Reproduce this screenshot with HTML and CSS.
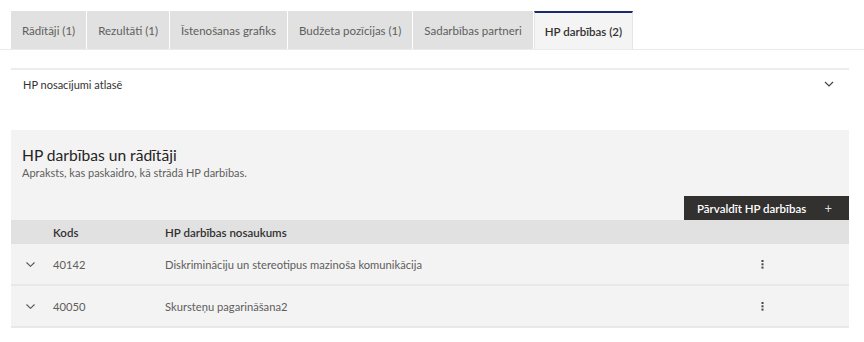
FILE: index.html
```html
<!DOCTYPE html>
<html lang="lv">
<head>
    <meta charset="UTF-8">
    <meta name="viewport" content="width=device-width, initial-scale=1.0">
    <link rel="stylesheet" href="styles.css">
    <title>HP darbības</title>
</head>
<body>
    <div class="tabs">
        <div class="tab">Rādītāji (1)</div>
        <div class="tab">Rezultāti (1)</div>
        <div class="tab">Īstenošanas grafiks</div>
        <div class="tab">Budžeta pozīcijas (1)</div>
        <div class="tab">Sadarbības partneri</div>
        <div class="tab active">HP darbības (2)</div>
    </div>

    <div class="page">
        <div class="accordion">
            <span>HP nosacījumi atlasē</span>
            <svg class="chevron" width="10" height="6" viewBox="0 0 10 6">
                <path d="M1 1 L5 5 L9 1" fill="none" stroke="#444" stroke-width="1.2"/>
            </svg>
        </div>

        <div class="section">
            <div class="section-head">
                <h2>HP darbības un rādītāji</h2>
                <p>Apraksts, kas paskaidro, kā strādā HP darbības.</p>
            </div>
            <div class="toolbar">
                <button type="button"><span>Pārvaldīt HP darbības</span> <span class="plus">+</span></button>
            </div>
            <div class="table">
                <div class="row head">
                    <div class="cell toggle"></div>
                    <div class="cell code">Kods</div>
                    <div class="cell name">HP darbības nosaukums</div>
                    <div class="cell menu"></div>
                </div>
                <div class="row">
                    <div class="cell toggle">
                        <svg width="9" height="5" viewBox="0 0 9 5"><path d="M0.5 0.5 L4.5 4.3 L8.5 0.5" fill="none" stroke="#555" stroke-width="1.1"/></svg>
                    </div>
                    <div class="cell code">40142</div>
                    <div class="cell name">Diskrimināciju un stereotipus mazinoša komunikācija</div>
                    <div class="cell menu">
                        <svg width="3" height="9" viewBox="0 0 3 9"><rect x="0.5" y="0" width="2" height="2" fill="#444"/><rect x="0.5" y="3.3" width="2" height="2" fill="#444"/><rect x="0.5" y="6.6" width="2" height="2" fill="#444"/></svg>
                    </div>
                </div>
                <div class="row">
                    <div class="cell toggle">
                        <svg width="9" height="5" viewBox="0 0 9 5"><path d="M0.5 0.5 L4.5 4.3 L8.5 0.5" fill="none" stroke="#555" stroke-width="1.1"/></svg>
                    </div>
                    <div class="cell code">40050</div>
                    <div class="cell name">Skursteņu pagarināšana2</div>
                    <div class="cell menu">
                        <svg width="3" height="9" viewBox="0 0 3 9"><rect x="0.5" y="0" width="2" height="2" fill="#444"/><rect x="0.5" y="3.3" width="2" height="2" fill="#444"/><rect x="0.5" y="6.6" width="2" height="2" fill="#444"/></svg>
                    </div>
                </div>
            </div>
        </div>
    </div>
</body>
</html>
```

FILE: styles.css
```css
body {
    font-family: Lato, "Noto Sans", sans-serif;
    font-size: 11.2px;
    color: #323130;
    background-color: #fff;
    margin: 0;
    padding: 0;
}

.tabs {
    display: flex;
    padding: 11px 0 0 11px;
    border-bottom: 1px solid #ebebeb;
}

.tab {
    height: 38px;
    display: flex;
    align-items: center;
    padding: 0 11px;
    font-size: 11.5px;
    background-color: #e1e1e1;
    color: #605e5c;
    border-right: 1px solid #fff;
}

.tab.active {
    background-color: #f4f4f4;
    color: #323130;
    font-weight: 600;
    border-top: 2px solid #1b2a6b;
    border-left: 1px solid #e6e6e6;
    border-right: 1px solid #e6e6e6;
    height: 36px;
    padding: 0 10px;
}

.page {
    padding: 18px 15px 0 11px;
}

.accordion {
    border-top: 2px solid #ececec;
    height: 29px;
    display: flex;
    align-items: center;
    justify-content: space-between;
    padding: 0 15px 0 12px;
    margin-bottom: 31px;
    font-size: 11px;
}

.chevron {
    margin-top: -1px;
}

.section {
    background-color: #f3f3f3;
}

.section-head {
    padding: 14px 11px 0 11px;
}

h2 {
    margin: 0;
    font-size: 15.6px;
    font-weight: 400;
    line-height: 22px;
    color: #252423;
}

.section-head p {
    margin: 0;
    font-size: 11px;
    line-height: 14px;
    color: #605e5c;
}

.toolbar {
    display: flex;
    justify-content: flex-end;
    margin-top: 16px;
}

button {
    font-family: inherit;
    font-size: 11.5px;
    font-weight: 600;
    height: 24px;
    width: 165px;
    background-color: #323130;
    color: #fff;
    border: none;
    border-radius: 0;
    padding: 0 13px;
    display: flex;
    align-items: center;
    justify-content: space-between;
    cursor: pointer;
}

.plus {
    font-weight: 400;
    font-size: 13px;
    color: #ddd;
    margin-right: 4px;
}

.row {
    display: flex;
    align-items: center;
    height: 40px;
    border-bottom: 2px solid #e8e8e8;
    color: #605e5c;
}

.row.head {
    height: 24px;
    background-color: #e1e1e1;
    border-bottom: none;
    color: #323130;
    font-size: 11.5px;
    font-weight: 600;
}

.toggle {
    width: 42px;
    box-sizing: border-box;
    padding-left: 15px;
    display: flex;
}

.code {
    width: 112px;
}

.name {
    flex: 1;
}

.menu {
    width: 88px;
    display: flex;
    justify-content: flex-start;
}
```
